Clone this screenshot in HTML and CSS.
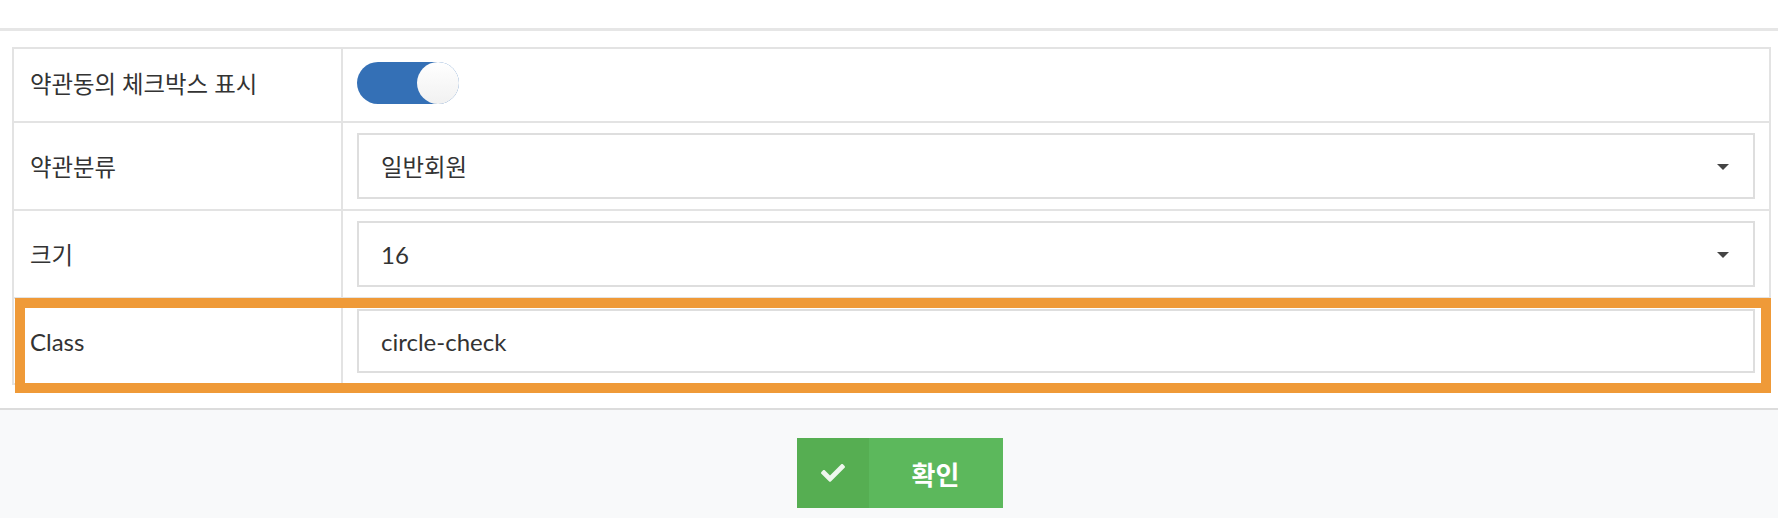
FILE: index.html
```html
<!DOCTYPE html>
<html>
  <head>
    <title>약관동의 설정</title>
    <link rel="stylesheet" href="styles.css">
  </head>
  <body>
    <div class="modal-head"></div>
    <div class="modal-body">
      <div class="table-wrap">
        <table class="form-table">
          <tr class="row-toggle">
            <td class="label-cell ko">약관동의 체크박스 표시</td>
            <td class="value-cell">
              <div class="toggle"><span class="knob"></span></div>
            </td>
          </tr>
          <tr>
            <td class="label-cell ko">약관분류</td>
            <td class="value-cell"><div class="select-box ko">일반회원</div></td>
          </tr>
          <tr>
            <td class="label-cell ko">크기</td>
            <td class="value-cell"><div class="select-box">16</div></td>
          </tr>
          <tr>
            <td class="label-cell">Class</td>
            <td class="value-cell"><div class="text-box">circle-check</div></td>
          </tr>
        </table>
        <div class="highlight"></div>
      </div>
    </div>
    <div class="modal-foot">
      <button class="btn-ok">
        <span class="btn-icon">
          <svg width="24" height="18" viewBox="0 65 512 385">
            <path fill="#eef7ee" d="M173.9 439.4l-166.4-166.4c-10-10-10-26.2 0-36.2l36.2-36.2c10-10 26.2-10 36.2 0L192 312.7 432.1 72.6c10-10 26.2-10 36.2 0l36.2 36.2c10 10 10 26.2 0 36.2l-294.4 294.4c-10 10-26.2 10-36.2 0z"/>
          </svg>
        </span>
        <span class="btn-text">확인</span>
      </button>
    </div>
  </body>
</html>
```

FILE: styles.css
```css
body {
  margin: 0;
  font-family: Lato, "Noto Sans CJK KR", sans-serif;
  font-size: 24px;
  color: #333;
  background: #fff;
}
.ko {
  font-size: 23.4px;
}
.modal-head {
  height: 28px;
  border-bottom: 3px solid #e6e6e6;
}
.modal-body {
  padding: 16px 7px 23px 12px;
}
.table-wrap {
  position: relative;
}
.form-table {
  width: 100%;
  border-collapse: separate;
  border-spacing: 0;
  border-top: 2px solid #e3e3e3;
  border-left: 2px solid #e3e3e3;
}
.form-table td {
  border-right: 2px solid #e3e3e3;
  border-bottom: 2px solid #e3e3e3;
  padding: 10px 14px;
  vertical-align: middle;
}
.label-cell {
  width: 297px;
  padding-left: 16px !important;
}
.row-toggle td {
  padding-top: 13px;
  padding-bottom: 17px;
}
.row-toggle .label-cell {
  padding-top: 9px;
  padding-bottom: 13px;
}
.toggle {
  width: 102px;
  height: 42px;
  border-radius: 21px;
  background: #3470b6;
  position: relative;
}
.knob {
  position: absolute;
  right: 0;
  top: 0;
  width: 42px;
  height: 42px;
  border-radius: 50%;
  background: linear-gradient(#ffffff, #f1f1f1);
}
.select-box, .text-box {
  height: 66px;
  box-sizing: border-box;
  border: 2px solid #dedede;
  padding: 0 18px 0 22px;
  display: flex;
  align-items: center;
  position: relative;
}
.select-box::after {
  content: "";
  position: absolute;
  right: 24px;
  top: 29px;
  border-left: 6px solid transparent;
  border-right: 6px solid transparent;
  border-top: 6px solid #444;
}
.text-box {
  height: 64px;
}
.highlight {
  position: absolute;
  left: 3px;
  top: 251px;
  width: 1756px;
  height: 95px;
  box-sizing: border-box;
  border: 10px solid #ef9a38;
}
.modal-foot {
  border-top: 2px solid #dcdcdc;
  background: #f8f9fa;
  height: 110px;
  padding-top: 28px;
  box-sizing: border-box;
  text-align: center;
}
.btn-ok {
  display: inline-flex;
  width: 206px;
  height: 70px;
  padding: 0;
  border: 0;
  background: #5cb85c;
  font-family: Lato, "Noto Sans CJK KR", sans-serif;
  margin-left: 21px;
}
.btn-icon {
  width: 72px;
  height: 70px;
  background: #56ae52;
  display: flex;
  align-items: center;
  justify-content: center;
}
.btn-text {
  flex: 1;
  display: flex;
  align-items: center;
  justify-content: center;
  color: #fff;
  font-size: 26px;
  font-weight: bold;
}
```
